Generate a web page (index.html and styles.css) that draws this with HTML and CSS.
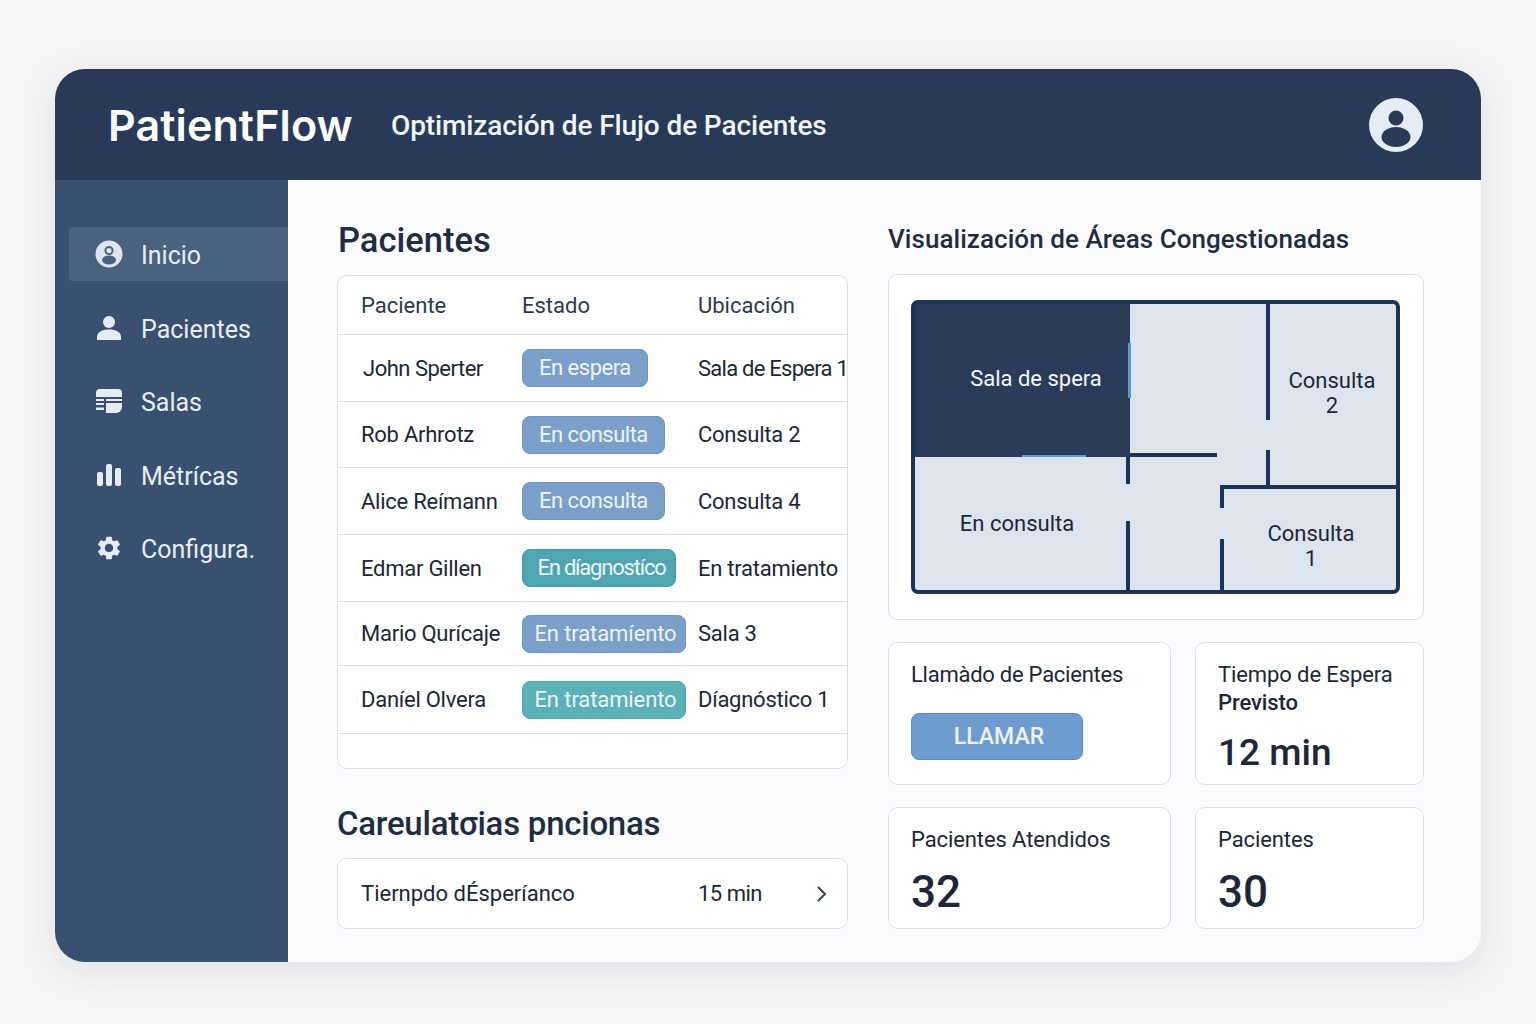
FILE: index.html
```html
<!DOCTYPE html>
<html lang="es">
<head>
  <meta charset="UTF-8">
  <meta name="viewport" content="width=device-width, initial-scale=1">
  <title>PatientFlow</title>
  <link rel="stylesheet" href="styles.css">
</head>
<body>

<div class="app">
  <header class="topbar">
    <div class="brand">PatientFlow</div>
    <div class="subtitle">Optimización de Flujo de Pacientes</div>
    <svg class="avatar" viewBox="0 0 54 54">
      <circle cx="27" cy="27" r="27" fill="#e6ecf4"/>
      <circle cx="27" cy="20" r="7.5" fill="#283a58"/>
      <ellipse cx="27" cy="39" rx="14.5" ry="10" fill="#283a58"/>
    </svg>
  </header>

  <div class="body-row">
    <nav class="sidebar">
      <a class="nav-item active">
        <svg class="nav-icon" viewBox="0 0 28 28">
          <circle cx="14" cy="14" r="13.5" fill="#dfe6ef"/>
          <circle cx="14" cy="10.5" r="3.6" fill="none" stroke="#4a6180" stroke-width="2"/>
          <ellipse cx="14" cy="20" rx="7" ry="4.5" fill="#4a6180"/>
        </svg>
        Inicio
      </a>
      <a class="nav-item">
        <svg class="nav-icon" viewBox="0 0 28 28">
          <circle cx="14" cy="8" r="6" fill="#e6ecf4"/>
          <path d="M2 26v-3c0-5 5-7.500 12-7.500s12 2.500 12 7.500v3z" fill="#e6ecf4"/>
        </svg>
        Pacientes
      </a>
      <a class="nav-item">
        <svg class="nav-icon" viewBox="0 0 28 28">
          <path d="M1 6a4 4 0 0 1 4-4h18a4 4 0 0 1 4 4v4H1z" fill="#e6ecf4"/>
          <path d="M1 12h8v2H1zM1 16h8v2H1zM1 20.500h8v2.500H1zM11 12h16v2H11z" fill="#e6ecf4"/>
          <path d="M11 16h16v4a6 6 0 0 1-6 6H11z" fill="#e6ecf4"/>
        </svg>
        Salas
      </a>
      <a class="nav-item">
        <svg class="nav-icon" viewBox="0 0 28 28">
          <rect x="2" y="11" width="6" height="14" rx="2" fill="#e6ecf4"/>
          <rect x="11" y="3" width="6" height="22" rx="2" fill="#e6ecf4"/>
          <rect x="20" y="7" width="6" height="18" rx="2" fill="#e6ecf4"/>
        </svg>
        Métrícas
      </a>
      <a class="nav-item">
        <svg class="nav-icon" viewBox="0 0 24 24">
          <path fill="#e6ecf4" d="M19.14 12.94c.04-.3.06-.61.06-.94 0-.32-.02-.64-.07-.94l2.03-1.58a.49.49 0 0 0 .12-.61l-1.92-3.32a.488.488 0 0 0-.59-.22l-2.39.96c-.5-.38-1.03-.7-1.62-.94l-.36-2.54a.484.484 0 0 0-.48-.41h-3.84c-.24 0-.43.17-.47.41l-.36 2.54c-.59.24-1.13.57-1.62.94l-2.39-.96c-.22-.08-.47 0-.59.22L2.74 8.87c-.12.21-.08.47.12.61l2.03 1.58c-.05.3-.09.63-.09.94s.02.64.07.94l-2.03 1.58a.49.49 0 0 0-.12.61l1.92 3.32c.12.22.37.29.59.22l2.39-.96c.5.38 1.03.7 1.62.94l.36 2.54c.05.24.24.41.48.41h3.84c.24 0 .44-.17.47-.41l.36-2.54c.59-.24 1.13-.56 1.62-.94l2.39.96c.22.08.47 0 .59-.22l1.92-3.32c.12-.22.07-.47-.12-.61l-2.01-1.58zM12 15.600c-1.980 0-3.600-1.620-3.600-3.600s1.620-3.600 3.600-3.600 3.600 1.620 3.600 3.600-1.620 3.600-3.600 3.600z"/>
        </svg>
        Configura.
      </a>
    </nav>

    <main class="content">
      <section class="col-left">
        <h2 class="title-lg">Pacientes</h2>
        <div class="card table-card">
          <table class="patients">
            <thead>
              <tr><th>Paciente</th><th>Estado</th><th>Ubicación</th></tr>
            </thead>
            <tbody>
              <tr class="r1"><td class="name-shift">John Sperter</td><td><span class="badge">En espera</span></td><td class="tight">Sala de Espera 1</td></tr>
              <tr class="r2"><td>Rob Arhrotz</td><td><span class="badge">En consulta</span></td><td>Consulta 2</td></tr>
              <tr class="r3"><td>Alice Reímann</td><td><span class="badge">En consulta</span></td><td>Consulta 4</td></tr>
              <tr class="r4"><td>Edmar Gillen</td><td><span class="badge teal">En díagnostíco</span></td><td>En tratamiento</td></tr>
              <tr class="r5"><td>Mario Qurícaje</td><td><span class="badge wide">En tratamíento</span></td><td>Sala 3</td></tr>
              <tr class="r6"><td>Daníel Olvera</td><td><span class="badge wide teal-light">En tratamiento</span></td><td>Díagnóstico 1</td></tr>
            </tbody>
          </table>
        </div>
        <h2 class="title-md">Careulatσias pncionas</h2>
        <div class="card wait-row">
          <span class="wait-name">Tiernpdo dÉsperíanco</span>
          <span class="wait-time">15 min</span>
          <svg class="chevron" viewBox="0 0 12 18"><path d="M2 2l7 7-7 7" fill="none" stroke="#33445c" stroke-width="2"/></svg>
        </div>
      </section>

      <section class="col-right">
        <h2 class="title-map">Visualización de Áreas Congestionadas</h2>
        <div class="card map-card">
          <svg class="plan" viewBox="0 0 489 294">
            <rect x="2" y="2" width="485" height="290" rx="5" fill="#dde4ee"/>
            <path d="M2 7a5 5 0 0 1 5-5h212v155H2z" fill="#2a3c5a"/>
            <g fill="#1b3456">
              <rect x="355" y="2" width="4" height="118"/>
              <rect x="355" y="150" width="4" height="36"/>
              <rect x="219" y="153" width="87" height="4"/>
              <rect x="215" y="157" width="4" height="27"/>
              <rect x="215" y="221" width="4" height="71"/>
              <rect x="310" y="185" width="177" height="4"/>
              <rect x="309" y="185" width="4" height="23"/>
              <rect x="309" y="239" width="4" height="53"/>
            </g>
            <rect x="217" y="43" width="3" height="55" fill="#5b9bdc"/>
            <rect x="111" y="155" width="64" height="2" fill="#5b9bdc"/>
            <rect x="2" y="2" width="485" height="290" rx="5" fill="none" stroke="#1b3456" stroke-width="4"/>
            <text class="room light" x="125" y="86">Sala de spera</text>
            <text class="room" x="106" y="231">En consulta</text>
            <text class="room" x="421" y="88">Consulta</text>
            <text class="room" x="421" y="113">2</text>
            <text class="room" x="400" y="241">Consulta</text>
            <text class="room" x="400" y="266">1</text>
          </svg>
        </div>
        <div class="stats">
          <div class="card stat stat-call">
            <div class="stat-label call-label">Llamàdo de Pacientes</div>
            <button class="call-btn">LLAMAR</button>
          </div>
          <div class="card stat stat-wait">
            <div class="stat-label">Tiempo de Espera<br><strong>Previsto</strong></div>
            <div class="stat-value-sm">12 min</div>
          </div>
          <div class="card stat">
            <div class="stat-label">Pacientes Atendidos</div>
            <div class="stat-value">32</div>
          </div>
          <div class="card stat">
            <div class="stat-label">Pacientes</div>
            <div class="stat-value">30</div>
          </div>
        </div>
      </section>
    </main>
  </div>
</div>

</body>
</html>
```

FILE: styles.css
```css
body {
  font-family: Roboto, "Liberation Sans", sans-serif;
  background: #f5f5f6;
  margin: 0;
  height: 1024px;
  overflow: hidden;
}
.app {
  width: 1426px;
  height: 893px;
  margin: 69px 0 0 55px;
  border-radius: 30px;
  overflow: hidden;
  display: flex;
  flex-direction: column;
  box-shadow: 0 8px 36px rgba(30,50,80,0.10);
}
.topbar {
  height: 111px;
  background: #283a58;
  display: flex;
  align-items: center;
  padding: 0 58px 0 53px;
  color: #fff;
  flex-shrink: 0;
}
.brand {
  font-family: Inter, sans-serif;
  font-size: 43px;
  font-weight: 600;
  letter-spacing: 0.1px;
  width: 283px;
}
.subtitle {
  font-size: 28px;
  line-height: 34px;
  padding-top: 2px;
  font-weight: 500;
  letter-spacing: -0.12px;
  color: #f2f5f9;
  flex: 1;
}
.avatar {
  width: 54px;
  height: 54px;
}
.body-row {
  flex: 1;
  display: flex;
  min-height: 0;
}
.sidebar {
  width: 233px;
  background: #3a5070;
  padding: 47px 0 0 14px;
  box-sizing: border-box;
  display: flex;
  flex-direction: column;
  gap: 19.5px;
  flex-shrink: 0;
}
.nav-item {
  height: 54px;
  box-sizing: border-box;
  display: flex;
  align-items: center;
  padding: 4px 0 0 26px;
  gap: 18px;
  font-size: 25px;
  line-height: 30px;
  color: #e8eef5;
  border-radius: 4px 0 0 4px;
}
.nav-item.active {
  background: #4a6180;
}
.nav-icon {
  width: 28px;
  height: 28px;
  flex-shrink: 0;
  margin-top: -4px;
}
.content {
  flex: 1;
  background: #fbfbfd;
  padding: 0 56px 0 49px;
  display: flex;
  gap: 40px;
  color: #1c2738;
}
.col-left {
  width: 511px;
  padding-top: 30px;
}
.col-right {
  width: 536px;
  padding-top: 30px;
}
.card {
  background: #fff;
  border: 1px solid #d8dfe9;
  border-radius: 10px;
  box-sizing: border-box;
}
.title-lg {
  font-size: 34.5px;
  line-height: 60px;
  font-weight: 500;
  margin: 0 0 5px 1px;
  color: #1f2d42;
}
.title-md {
  font-size: 33px;
  line-height: 50px;
  font-weight: 500;
  letter-spacing: -0.25px;
  margin: 30px 0 9px;
  color: #1f2d42;
}
.title-map {
  font-size: 26px;
  line-height: 58px;
  font-weight: 500;
  letter-spacing: 0.05px;
  margin: 0 0 6px;
  color: #1f2d42;
}
.table-card {
  height: 494px;
  overflow: hidden;
}
.patients {
  width: 100%;
  border-collapse: collapse;
  table-layout: fixed;
  font-size: 22px;
  letter-spacing: -0.25px;
}
.patients th, .patients td {
  padding: 0;
  border-bottom: 1px solid #d8dfe9;
  white-space: nowrap;
}
.patients th {
  font-weight: 400;
  text-align: left;
  height: 58px;
  color: #2c3a50;
  letter-spacing: 0;
}
.patients th:nth-child(1), .patients td:nth-child(1) {
  width: 184px;
  padding-left: 23px;
  box-sizing: border-box;
}
.patients th:nth-child(2), .patients td:nth-child(2) {
  width: 176px;
}
.patients td.name-shift {
  padding-left: 25px;
  letter-spacing: -0.5px;
}
.patients td.tight {
  letter-spacing: -0.75px;
}
.r1 td { height: 66px; }
.r2 td { height: 65px; }
.r3 td { height: 66px; }
.r4 td { height: 66px; }
.r5 td { height: 63px; }
.r6 td { height: 67px; }
.badge {
  display: inline-block;
  box-sizing: border-box;
  height: 38px;
  line-height: 36px;
  padding: 0 16px;
  border-radius: 8px;
  background: #7aa0c9;
  border: 1px solid #6b94c2;
  color: #eef4fa;
  letter-spacing: -0.5px;
}
.badge.teal {
  width: 154px;
  padding: 0 0 0 5px;
  text-align: center;
  background: #4fa5b0;
  border-color: #459aa6;
  letter-spacing: -1.2px;
}
.badge.wide {
  width: 164px;
  padding: 0 0 0 3px;
  text-align: center;
  letter-spacing: -0.1px;
}
.badge.teal-light {
  background: #5cb1b8;
  border-color: #52a8b0;
}
.wait-row {
  height: 71px;
  display: flex;
  align-items: center;
  font-size: 22px;
  padding-left: 23px;
}
.wait-name {
  width: 337px;
}
.wait-time {
  width: 118px;
  letter-spacing: -0.5px;
}
.chevron {
  width: 12px;
  height: 18px;
}
.map-card {
  height: 346px;
  padding: 25px 22px;
}
.plan {
  display: block;
  width: 489px;
  height: 294px;
}
.room {
  font-size: 22px;
  text-anchor: middle;
  fill: #1c2738;
}
.room.light {
  fill: #f4f7fb;
}
.stats {
  display: grid;
  grid-template-columns: 283px 229px;
  grid-template-rows: 143px 122px;
  gap: 22px 24px;
  margin-top: 22px;
}
.stat {
  padding: 18px 22px 0;
}
.stat-label {
  font-size: 22px;
  line-height: 28px;
  letter-spacing: -0.1px;
  white-space: nowrap;
  color: #1c2738;
}
.call-label {
  letter-spacing: -0.25px;
}
.stat-label strong {
  font-weight: 500;
}
.call-btn {
  display: block;
  width: 172px;
  height: 47px;
  margin-top: 24px;
  padding: 0 0 0 4px;
  background: #6e9bd0;
  border: 1px solid #5d8cc5;
  border-radius: 8px;
  color: #eef3fa;
  font-family: inherit;
  font-size: 23px;
  font-weight: 500;
}
.stat-value-sm {
  font-size: 37px;
  font-weight: 500;
  line-height: 50px;
  margin-top: 11px;
}
.stat-value {
  font-size: 44px;
  font-weight: 500;
  line-height: 52px;
  margin-top: 12px;
}
```
